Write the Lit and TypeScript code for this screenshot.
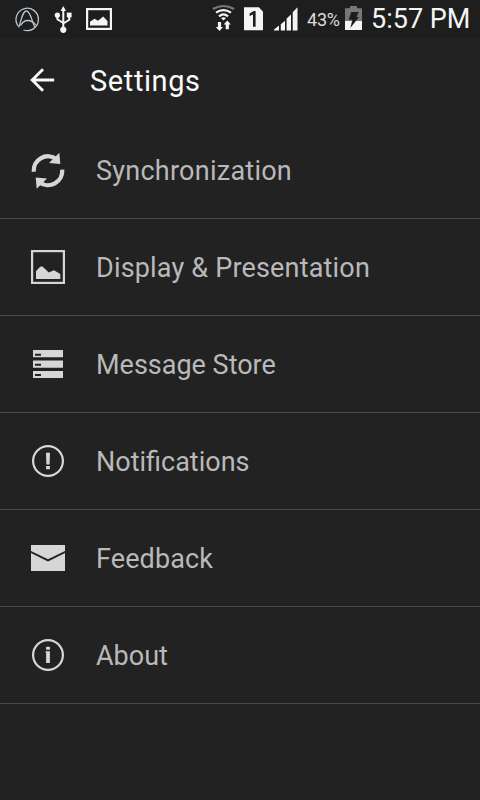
import { LitElement, html, css, svg } from 'lit';
import { customElement, property } from 'lit/decorators.js';

const icons: Record<string, unknown> = {
  sync: svg`
    <path d="M9.8 25.8A14.2 14.2 0 0 1 32.6 13.2" fill="none" stroke="currentColor" stroke-width="4.3"/>
    <path d="M35.3 6.7L36.3 18L25 17Z"/>
    <path d="M38.2 23.6A14.2 14.2 0 0 1 15.4 36.2" fill="none" stroke="currentColor" stroke-width="4.3"/>
    <path d="M12.7 42.7L11.7 31.4L23 32.4Z"/>
  `,
  display: svg`
    <rect x="8.1" y="8.1" width="31.8" height="31.8" fill="none" stroke="currentColor" stroke-width="2.2"/>
    <path d="M12 36V28.2Q15.5 23.5 17.7 23.2Q20 24.4 24.7 29.6L30 27.2L36.3 31V36Z"/>
  `,
  store: svg`
    <path fill-rule="evenodd" d="M9 10h30v7.3H9zM11 13.8v2h6v-2z"/>
    <path fill-rule="evenodd" d="M9 20.6h30v7.1H9zM11 23.8v2h6v-2z"/>
    <path fill-rule="evenodd" d="M9 31h30v7H9zM11 33.9v2h6v-2z"/>
  `,
  alert: svg`
    <circle cx="24" cy="24" r="14.9" fill="none" stroke="currentColor" stroke-width="2.2"/>
    <path d="M22 15.7h4l-.4 11.8h-3.2zM22.1 29h3.8v3.3h-3.8z"/>
  `,
  mail: svg`
    <path d="M7 11h34v6L24 25.3L7 17z"/>
    <path d="M7 19.1L24 27.4L41 19.1V37H7z"/>
  `,
  info: svg`
    <circle cx="24" cy="24" r="14.9" fill="none" stroke="currentColor" stroke-width="2.2"/>
    <path d="M22.1 15.7h3.8v3h-3.8zM21.6 20.2h4.3V32h-3.8V21.8h-.5z"/>
  `,
};

@customElement('status-bar')
export class StatusBar extends LitElement {
  static styles = css`
    :host {
      display: flex;
      justify-content: space-between;
      height: 38px;
      padding: 0 9px 0 14px;
      background: #1e1e1e;
      color: #f5f5f5;
    }

    .group {
      display: flex;
      align-items: center;
    }

    .left {
      gap: 14px;
    }

    svg {
      display: block;
      height: 38px;
      fill: currentColor;
    }

    .sim {
      margin-left: 8px;
    }

    .signal {
      margin-left: 10px;
    }

    .percent {
      width: 33px;
      margin: 2px 5px 0 9px;
      font-size: 18px;
      line-height: 36px;
      letter-spacing: -0.2px;
      color: #dcdcdc;
      white-space: nowrap;
    }

    .time {
      width: 100px;
      margin-left: 8px;
      font-size: 27px;
      line-height: 38px;
      white-space: nowrap;
    }
  `;

  render() {
    return html`
      <div class="group left">
        <svg width="26" viewBox="0 0 26 38">
          <g fill="none" stroke="#b9c4cc" stroke-width="1.3">
            <path d="M4.3 26.2A11.2 11.2 0 1 1 9.5 30"/>
            <path d="M4.6 27.4C7.5 20.5 8.3 11 12.4 11C16.2 11 17.5 20 20.8 27.2"/>
            <path d="M6.5 25.8C8.5 21.5 11.5 20.3 14.5 20.5C17.5 20.8 20 22.5 21.6 25"/>
          </g>
        </svg>
        <svg width="18" viewBox="0 0 18 38">
          <path d="M9.3 6L12 11H6.6z"/>
          <circle cx="9.3" cy="29.8" r="3.1"/>
          <circle cx="3.4" cy="15.2" r="2.6"/>
          <rect x="12.8" y="12.6" width="4.8" height="4.8"/>
          <path d="M9.3 10V29M3.4 15v4.3l5.9 3.7M15.3 16v3.8l-6 3.7" fill="none" stroke="currentColor" stroke-width="2"/>
        </svg>
        <svg width="26" viewBox="0 0 26 38">
          <rect x="1.1" y="9.1" width="23.8" height="19.8" fill="none" stroke="currentColor" stroke-width="2.2"/>
          <path d="M4 25.5V21.8L8.5 18.7L12 20.8L17.2 16.5L21.5 21V25.5z"/>
        </svg>
      </div>
      <div class="group">
        <svg width="24" viewBox="0 0 24 38">
          <g fill="none" stroke-width="2.2">
            <path d="M0.9 9Q11.5 3 22.1 9" stroke="#777"/>
            <path d="M4 12.7Q11.5 7.4 19 12.7M7 16.3Q11.5 12.6 16 16.3" stroke="currentColor"/>
          </g>
          <path d="M9 18Q11.5 16.4 14 18L11.5 20.4z"/>
          <path d="M5.9 22h3.2v5h2L7.5 31L3.8 27h2.1zM13.7 29.3h3.2v-4.7h2L15.3 20.6L11.6 24.6h2.1z"/>
        </svg>
        <svg class="sim" width="20" viewBox="0 0 20 38">
          <path d="M0 7.3h14.8L19 11.5V30.2H0z"/>
          <path d="M5.6 13.4L9.8 11H11.6V26.7H9V14.4L5.6 15.9z" fill="#1e1e1e"/>
        </svg>
        <svg class="signal" width="24" viewBox="0 0 24 38">
          <path d="M0 30.5V29.6L5 25.6v4.9zM6.8 30.5V24.2L11 20.8v9.7zM12.6 30.5V18.6L17 14.6v15.9zM18.7 30.5V12.2L23.5 7.2v23.3z"/>
        </svg>
        <span class="percent">43%</span>
        <svg width="18" viewBox="0 0 18 38">
          <path d="M5 6h7v2.3h5V21H0V8.3h5z" fill="#777"/>
          <path d="M0 21h17v9H0z"/>
          <path d="M6.2 12h7.6l-2.3 5H14L5.4 28l1.9-8.2H3.7z" fill="#1e1e1e"/>
        </svg>
        <span class="time">5:57 PM</span>
      </div>
    `;
  }
}

@customElement('settings-row')
export class SettingsRow extends LitElement {
  @property() icon = '';
  @property() label = '';
  @property({ type: Number }) tracking = 0;

  static styles = css`
    :host {
      display: flex;
      align-items: center;
      gap: 24px;
      height: 96px;
      padding-left: 24px;
      border-bottom: 1px solid #484848;
      color: #d6d6d6;
    }

    svg {
      flex: none;
      fill: currentColor;
    }

    .label {
      padding-top: 2px;
      font-size: 27px;
      line-height: 32px;
      color: #b9b9b9;
      white-space: nowrap;
    }
  `;

  render() {
    return html`
      <svg width="48" height="48" viewBox="0 0 48 48">${icons[this.icon]}</svg>
      <span class="label" style="letter-spacing: ${this.tracking}px">${this.label}</span>
    `;
  }
}

@customElement('app-root')
export class AppRoot extends LitElement {
  static styles = css`
    :host {
      display: block;
      height: 800px;
      overflow: hidden;
      background: #222;
      font-family: Roboto, sans-serif;
    }

    header {
      display: flex;
      align-items: center;
      gap: 35px;
      height: 84px;
      padding-left: 30px;
      color: #fafafa;
    }

    h1 {
      margin: 0;
      padding-top: 2px;
      font-size: 29px;
      font-weight: 400;
      line-height: 36px;
      letter-spacing: 0.6px;
    }
  `;

  items = [
    { icon: 'sync', label: 'Synchronization', tracking: 0.25 },
    { icon: 'display', label: 'Display & Presentation', tracking: 0.18 },
    { icon: 'store', label: 'Message Store', tracking: 0 },
    { icon: 'alert', label: 'Notifications', tracking: 0 },
    { icon: 'mail', label: 'Feedback', tracking: 0.1 },
    { icon: 'info', label: 'About', tracking: 0 },
  ];

  render() {
    return html`
      <status-bar></status-bar>
      <header>
        <svg width="25" height="24" viewBox="0 0 25 24">
          <path d="M13 1.2L2.2 12L13 22.8M2.5 12H24.2" fill="none" stroke="currentColor" stroke-width="2.9"/>
        </svg>
        <h1>Settings</h1>
      </header>
      <main>
        ${this.items.map((item) => html`
          <settings-row icon=${item.icon} label=${item.label} tracking=${item.tracking}></settings-row>
        `)}
      </main>
    `;
  }
}
